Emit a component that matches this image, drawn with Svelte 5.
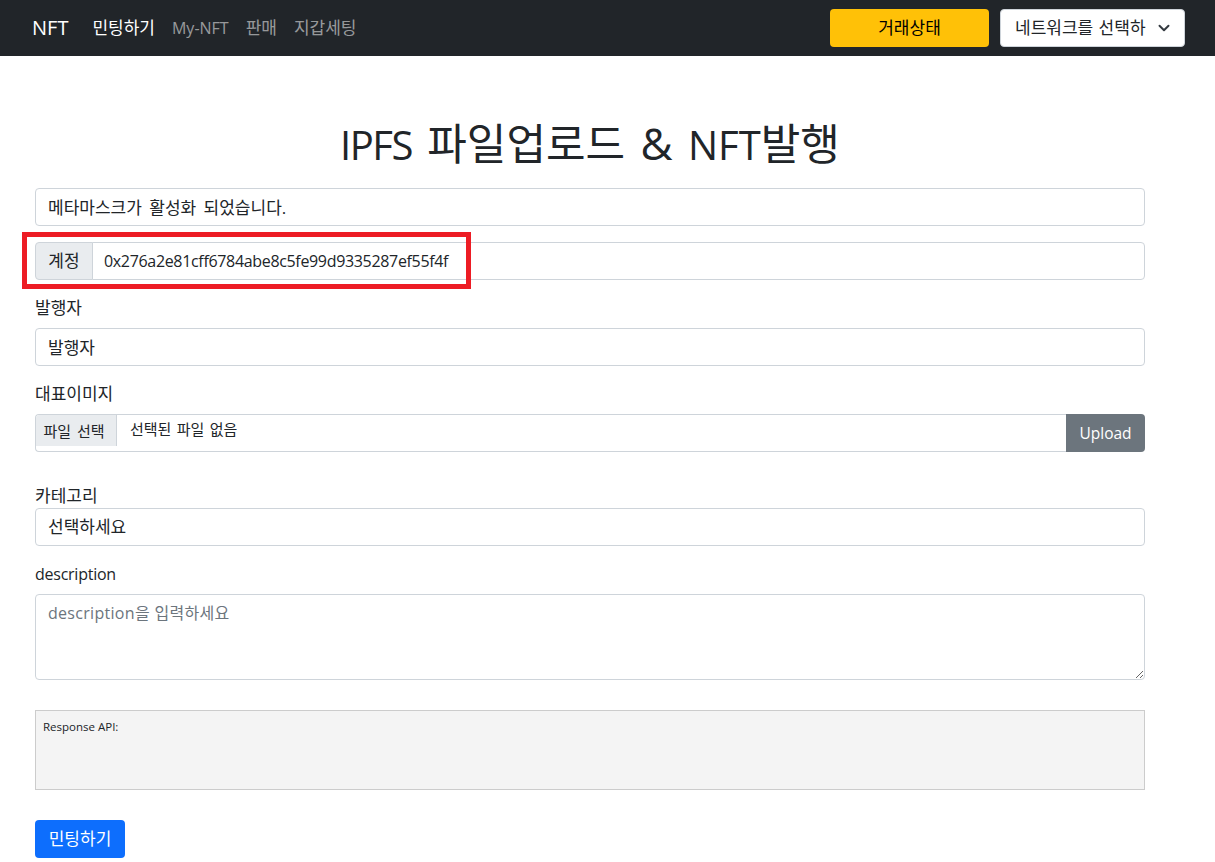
<script>
  const links = [
    { label: '민팅하기', active: true, ko: true },
    { label: 'My-NFT', active: false, ko: false },
    { label: '판매', active: false, ko: true },
    { label: '지갑세팅', active: false, ko: true }
  ];
</script>

<nav class="navbar">
  <a class="brand" href="#top">NFT</a>
  <ul class="links">
    {#each links as l}
      <li><a href="#top" class:active={l.active} class:ko={l.ko}>{l.label}</a></li>
    {/each}
  </ul>
  <div class="nav-right">
    <button class="btn warning ko">거래상태</button>
    <div class="select nav-select ko">
      <span>네트워크를 선택하</span>
      <svg class="chev" viewBox="0 0 16 16" width="12" height="12" aria-hidden="true">
        <path d="M2 5l6 6 6-6" fill="none" stroke="#343a40" stroke-width="2.6" stroke-linecap="round" stroke-linejoin="round" />
      </svg>
    </div>
  </div>
</nav>

<main class="container">
  <h1><span class="ipfs">IPFS</span> <span class="h-ko">파일업로드</span> <span class="amp">&amp;</span> <span class="nft">NFT</span><span class="h-ko">발행</span></h1>

  <input class="control ko status" readonly value="메타마스크가 활성화 되었습니다." />

  <div class="group account">
    <span class="addon ko">계정</span>
    <input class="control addr" readonly value="0x276a2e81cff6784abe8c5fe99d9335287ef55f4f" />
    <span class="mark"></span>
  </div>

  <label class="field ko" for="issuer">발행자</label>
  <input id="issuer" class="control ko" readonly value="발행자" />

  <label class="field ko" for="upload">대표이미지</label>
  <div class="group file" id="upload">
    <div class="file-box">
      <span class="file-btn">파일 선택</span>
      <span class="file-name">선택된 파일 없음</span>
    </div>
    <button class="btn secondary">Upload</button>
  </div>

  <div class="field category ko">카테고리</div>
  <div class="select form-select ko"><span>선택하세요</span></div>

  <label class="field latin" for="desc">description</label>
  <textarea id="desc" class="control area" placeholder="description을 입력하세요"></textarea>

  <div class="response">Response API:</div>

  <button class="btn primary ko">민팅하기</button>
</main>

<style>
  :global(body) {
    margin: 0;
    background: #fff;
    color: #212529;
    font-family: "Open Sans", "Noto Sans CJK KR", sans-serif;
    font-size: 16px;
    line-height: 24px;
  }

  .navbar {
    height: 56px;
    background: #212529;
    display: flex;
    align-items: center;
    padding: 0 30px 0 32px;
    box-sizing: border-box;
  }
  .brand {
    color: #fff;
    font-size: 20px;
    text-decoration: none;
    margin-right: 24px;
  }
  .links {
    display: flex;
    gap: 17px;
    list-style: none;
    margin: 0;
    padding: 0;
  }
  .links a {
    color: rgba(255, 255, 255, 0.55);
    text-decoration: none;
  }
  .links a.active { color: #fff; }
  .links a.ko { font-size: 17px; }
  .nav-right {
    margin-left: auto;
    display: flex;
    gap: 11px;
  }

  .btn {
    height: 38px;
    border: 1px solid transparent;
    border-radius: 4px;
    font: inherit;
    padding: 0 12px;
    box-sizing: border-box;
  }
  .btn.ko { font-size: 17px; }
  .warning { width: 159px; background: #ffc107; color: #000; }
  .secondary { width: 79px; background: #6c757d; color: #fff; border-radius: 0 4px 4px 0; flex: none; font-size: 15.5px; }
  .primary { width: 90px; background: #0d6efd; color: #fff; display: block; }

  .select {
    height: 38px;
    background: #fff;
    border: 1px solid #ced4da;
    border-radius: 4px;
    box-sizing: border-box;
    display: flex;
    align-items: center;
    padding: 0 12px;
  }
  .select.ko { font-size: 17px; }
  .nav-select {
    width: 185px;
    padding: 0 14px;
    justify-content: space-between;
    white-space: nowrap;
    word-spacing: 1px;
  }
  .form-select { width: 1110px; }

  .container {
    width: 1110px;
    margin-left: 35px;
    padding-bottom: 4px;
  }
  h1 {
    margin: 0;
    padding: 56px 0 14px;
    height: 62px;
    font-size: 40px;
    line-height: 62px;
    font-weight: 400;
    text-align: center;
    word-spacing: 5px;
  }
  .h-ko { font-size: 43px; }
  .ipfs { letter-spacing: -1.5px; }
  .amp { font-size: 44px; }

  .control {
    display: block;
    width: 100%;
    height: 38px;
    padding: 6px 12px;
    box-sizing: border-box;
    border: 1px solid #ced4da;
    border-radius: 4px;
    background: #fff;
    color: #212529;
    font: inherit;
    outline: none;
  }
  .control.ko {
    font-size: 17px;
    padding: 5px 12px 7px;
  }
  .status { word-spacing: 3px; }
  .control::placeholder { color: #6c757d; opacity: 1; letter-spacing: 0.3px; }

  .group {
    display: flex;
    position: relative;
  }
  .account { margin-top: 16px; }
  .account .control {
    flex: 1;
    border-radius: 0 4px 4px 0;
    margin-left: -1px;
  }
  .addr {
    letter-spacing: -0.33px;
    padding-left: 11px;
  }
  .addon {
    width: 58px;
    flex: none;
    box-sizing: border-box;
    height: 38px;
    display: flex;
    align-items: center;
    justify-content: center;
    background: #e9ecef;
    border: 1px solid #ced4da;
    border-radius: 4px 0 0 4px;
    font-size: 17px;
  }
  .mark {
    position: absolute;
    left: -13px;
    top: -10px;
    width: 449px;
    height: 57px;
    box-sizing: border-box;
    border: 5px solid #ed1c24;
    pointer-events: none;
  }

  .field {
    display: block;
    margin: 16px 0 8px;
  }
  .field.ko { font-size: 17px; }
  .latin { letter-spacing: -0.25px; }
  .category { margin: 32px 0 0; }

  .file-box {
    flex: 1;
    height: 38px;
    box-sizing: border-box;
    border: 1px solid #ced4da;
    border-right: 0;
    border-radius: 4px 0 0 4px;
    display: flex;
    align-items: flex-start;
    font-size: 15px;
    overflow: hidden;
    word-spacing: 2px;
  }
  .file-btn {
    width: 81px;
    height: 31px;
    flex: none;
    box-sizing: border-box;
    display: flex;
    align-items: center;
    justify-content: center;
    padding-right: 4px;
    background: #e9ecef;
    border-right: 1px solid #ced4da;
  }
  .file-name {
    height: 31px;
    line-height: 29px;
    margin-left: 13px;
    word-spacing: 1.5px;
  }

  .area {
    height: 86px;
    resize: vertical;
  }

  .response {
    height: 80px;
    margin: 30px 0;
    padding: 6px 7px 7px;
    box-sizing: border-box;
    border: 1px solid #ccc;
    background: #f4f4f4;
    font-size: 11.5px;
    line-height: 20px;
  }
</style>
